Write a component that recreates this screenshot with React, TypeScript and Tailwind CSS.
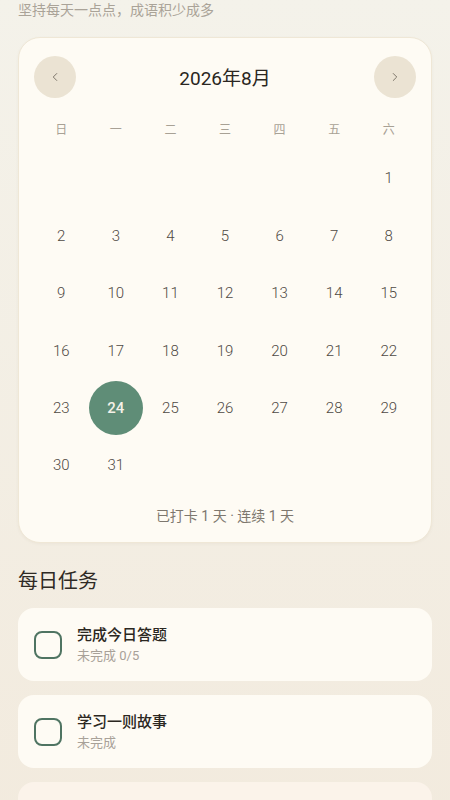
import { ChevronLeft, ChevronRight } from "lucide-react";

const font = { fontFamily: "Roboto, 'Noto Sans CJK SC', sans-serif" };

const weekdays = ["日", "一", "二", "三", "四", "五", "六"];

// 2026-08-01 is Saturday
const days: (number | null)[] = [...Array(6).fill(null), ...Array.from({ length: 31 }, (_, i) => i + 1)];

const tasks = [
  { title: "完成今日答题", sub: "未完成 0/5" },
  { title: "学习一则故事", sub: "未完成" },
  { title: "复习错题", sub: "未完成" },
];

export default function App() {
  const today = 24;

  return (
    <div
      className="min-h-screen bg-gradient-to-b from-[#f4f2ea] to-[#f2eadd] px-[18px] pb-8 overflow-hidden"
      style={font}
    >
      {/* 副标题 */}
      <p className="text-[14px] leading-[20px] text-[#aaa398]">坚持每天一点点，成语积少成多</p>

      {/* 日历 */}
      <div className="mt-[17px] rounded-[22px] border border-[#efe7d6] bg-[#fefbf4] px-[15px] pt-[18px] pb-[16px] shadow-[0_1px_3px_rgba(120,100,60,0.06)]">
        <div className="flex items-center justify-between">
          <button className="flex h-[42px] w-[42px] items-center justify-center rounded-full bg-[#ebe3d3] text-[#6e675c]">
            <ChevronLeft size={14} strokeWidth={1.5} />
          </button>
          <div className="pt-[4px] text-[19px] font-normal text-[#2a2621]">2026年8月</div>
          <button className="flex h-[42px] w-[42px] items-center justify-center rounded-full bg-[#ebe3d3] text-[#6e675c]">
            <ChevronRight size={14} strokeWidth={1.5} />
          </button>
        </div>

        <div className="mt-[20px] grid grid-cols-7">
          {weekdays.map((w) => (
            <div key={w} className="text-center text-[12px] leading-[24px] text-[#a8a195]">
              {w}
            </div>
          ))}
        </div>

        <div className="mt-[8px] grid grid-cols-7">
          {days.map((d, i) => (
            <div key={i} className="flex h-[57.4px] items-center justify-center">
              {d !== null &&
                (d === today ? (
                  <div className="flex h-[54px] w-[54px] items-center justify-center rounded-full bg-[#5f8d77] text-[15px] font-medium text-[#f4f1e8]">
                    {d}
                  </div>
                ) : (
                  <span className="text-[15px] font-light text-[#4e4943]">{d}</span>
                ))}
            </div>
          ))}
        </div>

        <p className="mt-[12px] text-center text-[14px] leading-[20px] text-[#7d776e]">已打卡 1 天 · 连续 1 天</p>
      </div>

      {/* 每日任务 */}
      <h2 className="mt-[25px] text-[20px] font-normal leading-[26px] text-[#2f2a24]">每日任务</h2>

      <div className="mt-[14px] flex flex-col gap-[14px]">
        {tasks.map((t, i) => (
          <div
            key={t.title}
            className={`flex h-[73px] items-center gap-[15px] rounded-[16px] px-[16px] ${
              i === 2 ? "bg-[#fbf3ea]" : "bg-[#fefbf4]"
            }`}
          >
            <div className="h-[28px] w-[28px] shrink-0 rounded-[8px] border-[2.5px] border-[#4f7462]" />
            <div className="flex flex-col">
              <span className="text-[15px] font-medium leading-[21px] text-[#2b2721]">{t.title}</span>
              <span className="text-[13px] leading-[19px] text-[#a8a198]">{t.sub}</span>
            </div>
          </div>
        ))}
      </div>
    </div>
  );
}
